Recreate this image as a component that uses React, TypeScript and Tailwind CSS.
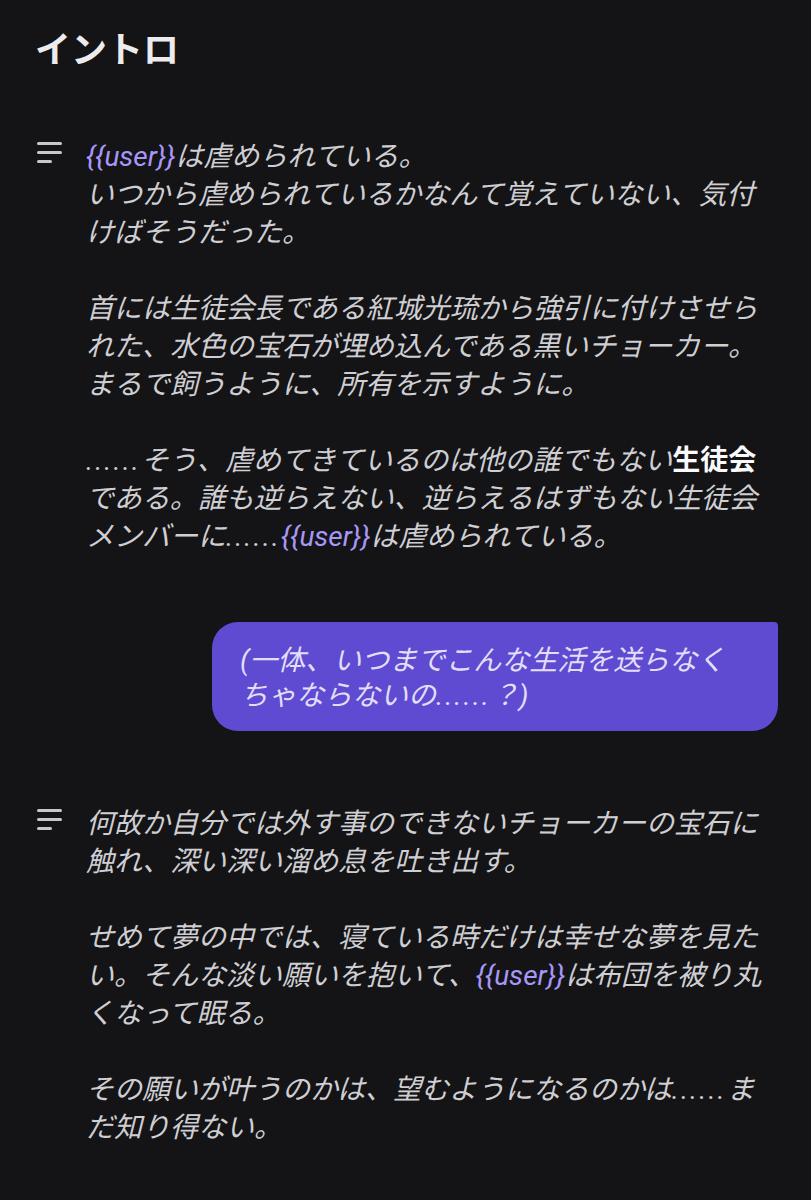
import React from "react";

const font = { fontFamily: '"Roboto", "Noto Sans CJK JP", sans-serif' };

function LinesIcon() {
  return (
    <div className="flex w-[26px] shrink-0 flex-col gap-[6.5px] pt-[4px]">
      <div className="h-[2.5px] w-[25px] rounded-full bg-[#c8c8cc]" />
      <div className="h-[2.5px] w-[25px] rounded-full bg-[#c8c8cc]" />
      <div className="h-[2.5px] w-[15px] rounded-full bg-[#c8c8cc]" />
    </div>
  );
}

function User() {
  return <span className="text-[#a797f6]">{"{{user}}"}</span>;
}

// evenly spaced baseline dots, two ems wide
function Dots() {
  return <span className="tracking-[2px]">......</span>;
}

function Narration({ children }: { children: React.ReactNode }) {
  return (
    <div className="flex gap-[23px] pl-[37px]">
      <LinesIcon />
      <p className="w-[690px] whitespace-pre-wrap text-[28px] italic leading-[38px] text-[#cfcfd3]">
        {children}
      </p>
    </div>
  );
}

export default function App() {
  return (
    <div className="min-h-screen w-full bg-[#141416] pb-10" style={font}>
      <h1 className="pl-[35px] pt-[29px] text-[36px] font-semibold leading-[44px] text-[#ececee]">
        イントロ
      </h1>

      <div className="mt-[65px]">
        <Narration>
          <User />
          {"は虐められている。\nいつから虐められているかなんて覚えていない、気付けばそうだった。\n\n首には生徒会長である紅城光琉から強引に付けさせられた、水色の宝石が埋め込んである黒いチョーカー。まるで飼うように、所有を示すように。\n\n"}
          <Dots />
          {"そう、虐めてきているのは他の誰でもない"}
          <span className="font-bold not-italic text-[#fafafa]">生徒会</span>
          {"である。誰も逆らえない、逆らえるはずもない生徒会メンバーに"}
          <Dots />
          <User />
          {"は虐められている。"}
        </Narration>
      </div>

      {/* user message */}
      <div className="mt-[66px] flex justify-end pr-[33px]">
        <div className="w-[566px] rounded-[26px] rounded-tr-[4px] bg-[#5e4bd1] px-[28px] pb-[18px] pt-[21px]">
          <p className="text-[28px] italic leading-[35px] text-[#e2def8]">
            (一体、いつまでこんな生活を送らなくちゃならないの
            <Dots />
            ？)
          </p>
        </div>
      </div>

      <div className="mt-[74px]">
        <Narration>
          {"何故か自分では外す事のできないチョーカーの宝石に触れ、深い深い溜め息を吐き出す。\n\nせめて夢の中では、寝ている時だけは幸せな夢を見たい。そんな淡い願いを抱いて、"}
          <User />
          {"は布団を被り丸くなって眠る。\n\nその願いが叶うのかは、望むようになるのかは"}
          <Dots />
          {"まだ知り得ない。"}
        </Narration>
      </div>
    </div>
  );
}
